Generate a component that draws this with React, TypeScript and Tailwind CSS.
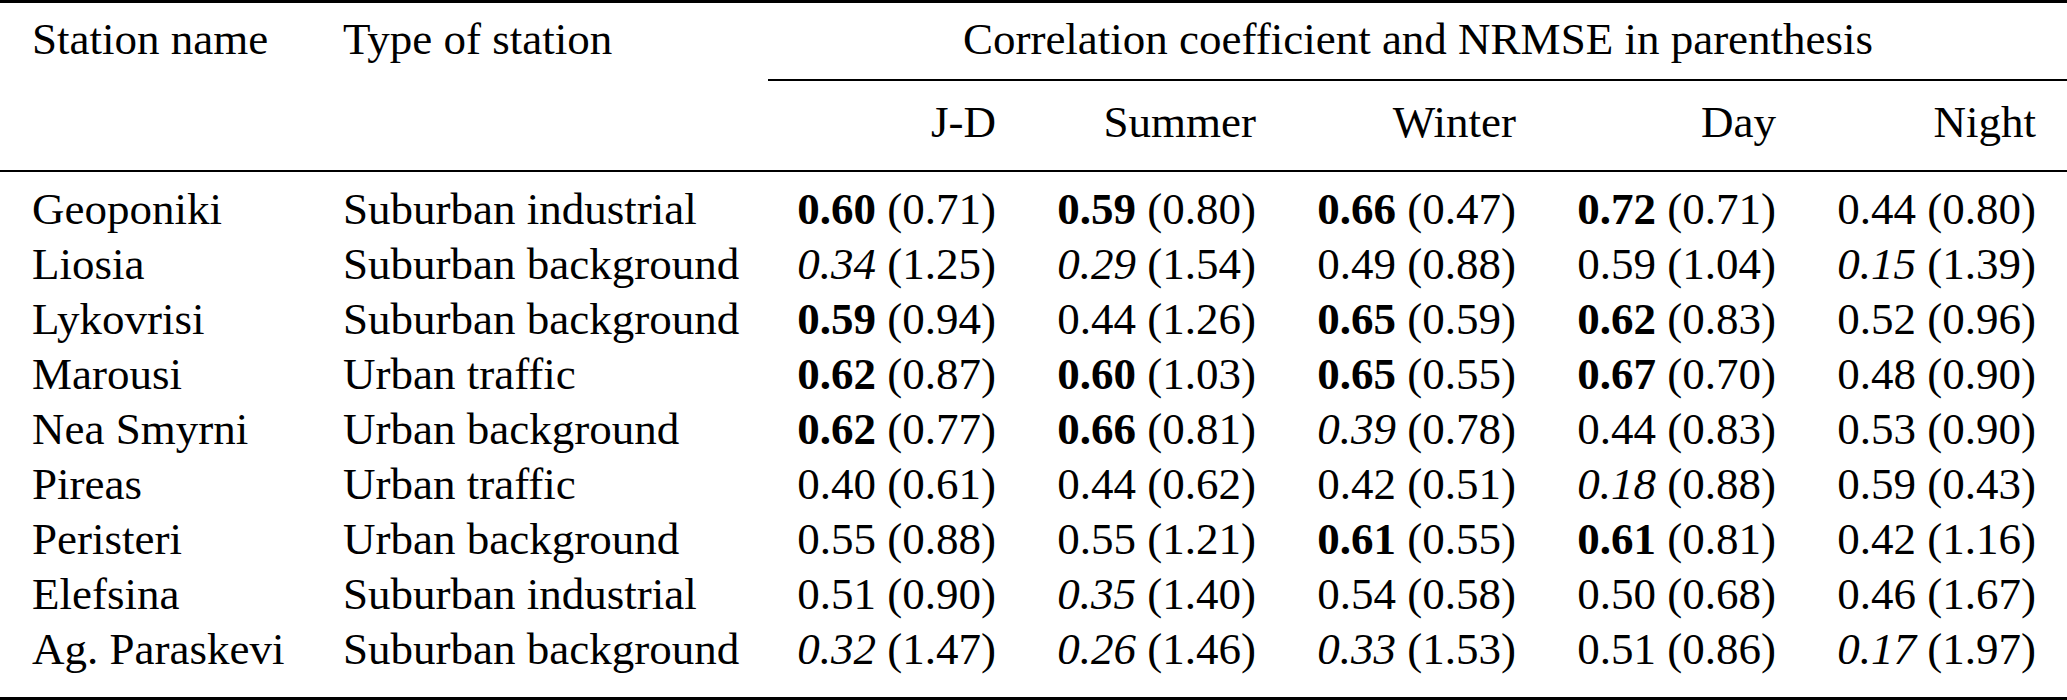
import React from 'react';

type Cell = { v: string; e: string; s?: 'b' | 'i' };

interface Row {
  name: string;
  type: string;
  cells: Cell[];
}

const c = (raw: string, e: string): Cell => {
  if (raw.startsWith('B')) return { v: raw.slice(1), e, s: 'b' };
  if (raw.startsWith('I')) return { v: raw.slice(1), e, s: 'i' };
  return { v: raw, e };
};

const rows: Row[] = [
  { name: 'Geoponiki', type: 'Suburban industrial', cells: [c('B0.60', '0.71'), c('B0.59', '0.80'), c('B0.66', '0.47'), c('B0.72', '0.71'), c('0.44', '0.80')] },
  { name: 'Liosia', type: 'Suburban background', cells: [c('I0.34', '1.25'), c('I0.29', '1.54'), c('0.49', '0.88'), c('0.59', '1.04'), c('I0.15', '1.39')] },
  { name: 'Lykovrisi', type: 'Suburban background', cells: [c('B0.59', '0.94'), c('0.44', '1.26'), c('B0.65', '0.59'), c('B0.62', '0.83'), c('0.52', '0.96')] },
  { name: 'Marousi', type: 'Urban traffic', cells: [c('B0.62', '0.87'), c('B0.60', '1.03'), c('B0.65', '0.55'), c('B0.67', '0.70'), c('0.48', '0.90')] },
  { name: 'Nea Smyrni', type: 'Urban background', cells: [c('B0.62', '0.77'), c('B0.66', '0.81'), c('I0.39', '0.78'), c('0.44', '0.83'), c('0.53', '0.90')] },
  { name: 'Pireas', type: 'Urban traffic', cells: [c('0.40', '0.61'), c('0.44', '0.62'), c('0.42', '0.51'), c('I0.18', '0.88'), c('0.59', '0.43')] },
  { name: 'Peristeri', type: 'Urban background', cells: [c('0.55', '0.88'), c('0.55', '1.21'), c('B0.61', '0.55'), c('B0.61', '0.81'), c('0.42', '1.16')] },
  { name: 'Elefsina', type: 'Suburban industrial', cells: [c('0.51', '0.90'), c('I0.35', '1.40'), c('0.54', '0.58'), c('0.50', '0.68'), c('0.46', '1.67')] },
  { name: 'Ag. Paraskevi', type: 'Suburban background', cells: [c('I0.32', '1.47'), c('I0.26', '1.46'), c('I0.33', '1.53'), c('0.51', '0.86'), c('I0.17', '1.97')] },
];

const periods = ['J-D', 'Summer', 'Winter', 'Day', 'Night'];

const gridCols = 'grid grid-cols-[311px_425px_228px_260px_260px_260px_260px] pl-[32px] pr-[31px]';

const ValueCell: React.FC<{ cell: Cell }> = ({ cell }) => (
  <div className="text-right whitespace-nowrap">
    <span className={cell.s === 'b' ? 'font-bold' : cell.s === 'i' ? 'italic' : ''}>{cell.v}</span>{' '}
    ({cell.e})
  </div>
);

export default function App() {
  return (
    <div className="w-[2067px] h-[700px] bg-white text-black [font-family:Liberation_Serif,Times_New_Roman,serif] text-[45px] leading-[55px] overflow-hidden">
      {/* toprule */}
      <div className="h-[3px] bg-black" />

      {/* header row 1 */}
      <div className={`${gridCols} pt-[9.3px]`}>
        <div className="whitespace-nowrap">Station name</div>
        <div className="whitespace-nowrap">Type of station</div>
        <div className="col-span-5 pl-[32px] text-center whitespace-nowrap">Correlation coefficient and NRMSE in parenthesis</div>
      </div>

      {/* cmidrule */}
      <div className="ml-[768px] mt-[12px] h-[2px] bg-black" />

      {/* header row 2 */}
      <div className={`${gridCols} mt-[14px]`}>
        <div />
        <div />
        {periods.map((p) => (
          <div key={p} className="text-right">{p}</div>
        ))}
      </div>

      {/* midrule */}
      <div className="mt-[19.5px] h-[2.5px] bg-black" />

      {/* body */}
      <div className="mt-[10px]">
        {rows.map((r) => (
          <div key={r.name} className={gridCols}>
            <div className="whitespace-nowrap">{r.name}</div>
            <div className="whitespace-nowrap">{r.type}</div>
            {r.cells.map((cell, i) => (
              <ValueCell key={i} cell={cell} />
            ))}
          </div>
        ))}
      </div>

      {/* bottomrule */}
      <div className="mt-[19.7px] h-[3px] bg-black" />
    </div>
  );
}
